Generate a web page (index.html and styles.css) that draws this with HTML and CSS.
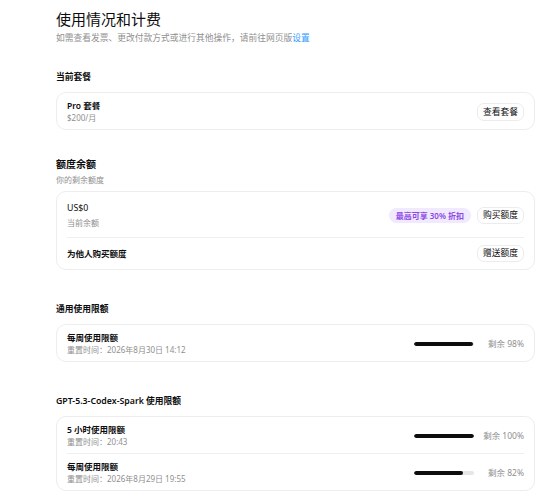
FILE: index.html
```html
<!DOCTYPE html>
<html lang="zh-CN">
<head>
	<meta charset="utf-8">
	<meta name="viewport" content="width=device-width, initial-scale=1">
	<title>使用情况和计费</title>
	<link rel="stylesheet" href="styles.css">
</head>
<body>
<div class="page">

	<h1 class="title">使用情况和计费</h1>
	<p class="lead">如需查看发票、更改付款方式或进行其他操作，请前往网页版<a href="#">设置</a></p>

	<!-- 当前套餐 -->
	<section class="section first">
		<h2 class="label">当前套餐</h2>
		<div class="card">
			<div class="row plan">
				<div class="info">
					<div class="name">Pro 套餐</div>
					<div class="meta">$200/月</div>
				</div>
				<button class="btn">查看套餐</button>
			</div>
		</div>
	</section>

	<!-- 额度余额 -->
	<section class="section credits">
		<h2 class="heading">额度余额</h2>
		<p class="sub">你的剩余额度</p>
		<div class="card">
			<div class="row balance">
				<div class="info">
					<div class="amount">US$0</div>
					<div class="meta">当前余额</div>
				</div>
				<div class="actions">
					<span class="badge">最高可享 30% 折扣</span>
					<button class="btn">购买额度</button>
				</div>
			</div>
			<div class="row gift">
				<div class="name">为他人购买额度</div>
				<button class="btn">赠送额度</button>
			</div>
		</div>
	</section>

	<!-- 通用使用限额 -->
	<section class="section">
		<h2 class="label">通用使用限额</h2>
		<div class="card">
			<div class="row limit">
				<div class="info">
					<div class="name">每周使用限额</div>
					<div class="meta">重置时间：2026年8月30日 14:12</div>
				</div>
				<div class="usage">
					<div class="bar"><div class="fill" style="width: 98%"></div></div>
					<span class="left">剩余 98%</span>
				</div>
			</div>
		</div>
	</section>

	<!-- Codex-Spark 使用限额 -->
	<section class="section">
		<h2 class="label">GPT-5.3-Codex-Spark 使用限额</h2>
		<div class="card">
			<div class="row limit">
				<div class="info">
					<div class="name">5 小时使用限额</div>
					<div class="meta">重置时间：20:43</div>
				</div>
				<div class="usage">
					<div class="bar"><div class="fill" style="width: 100%"></div></div>
					<span class="left">剩余 100%</span>
				</div>
			</div>
			<div class="row limit">
				<div class="info">
					<div class="name">每周使用限额</div>
					<div class="meta">重置时间：2026年8月29日 19:55</div>
				</div>
				<div class="usage">
					<div class="bar"><div class="fill" style="width: 82%"></div></div>
					<span class="left">剩余 82%</span>
				</div>
			</div>
		</div>
	</section>

</div>
</body>
</html>
```

FILE: styles.css
```css
body{margin: 0; background: #fff;}
body,button{
	font-family: "Noto Sans", "Noto Sans CJK SC", sans-serif;
	color: #0d0d0d;
}
.page{padding: 8px 17px 0 56px;}

.title{margin: 0; font-size: 15px; line-height: 22px; font-weight: 400;}
.lead{margin: 1px 0 0; font-size: 8.75px; line-height: 14px; color: #8f8f8f;}
.lead a{color: #339cff; text-decoration: none;}

.section{margin-top: 32px;}
.section.first{margin-top: 25px;}
.section.credits{margin-top: 27px;}

.label{margin: 0 0 8px; font-size: 8.75px; line-height: 14px; font-weight: 600;}
.heading{margin: 0; font-size: 10px; line-height: 14px; font-weight: 600;}
.sub{margin: 2px 0 4px; font-size: 8px; line-height: 14px; color: #8f8f8f;}

.card{
	border: 1px solid #ededed;
	border-radius: 10px;
	background: #fff;
}
.row{
	display: flex; align-items: center; justify-content: space-between;
	margin: 0 10px;
	padding: 7px 0 5px;
}
.row + .row{border-top: 1px solid #efefef;}
.row.plan{padding: 7px 0 5px;}
.row.balance{padding: 10px 0 8px;}
.row.gift{padding: 7px 0 7px;}

.info{display: flex; flex-direction: column;}
.name{font-size: 8.5px; line-height: 12px; font-weight: 600;}
.meta{font-size: 8px; line-height: 12px; color: #8f8f8f;}
.balance .info .meta{line-height: 13px; margin-top: 1px;}
.amount{font-size: 8.75px; line-height: 13px;}

.actions{display: flex; align-items: center; gap: 6px;}

.btn{
	height: 17px; padding: 0 5px;
	border: 1px solid #ececec; border-radius: 7px;
	background: #fff;
	font-size: 8.75px; line-height: 15px;
	cursor: pointer;
}
.row.plan .btn{height: 18px;}

.badge{
	height: 15px; padding: 0 7px;
	border-radius: 8px;
	background: #f1e9fd; color: #8b48e6;
	font-size: 8px; line-height: 15px; font-weight: 600;
}

.usage{display: flex; align-items: center;}
.bar{
	width: 60px; height: 4px;
	border-radius: 2px;
	background: #e6e6e6;
	overflow: hidden;
}
.fill{height: 100%; border-radius: 2px; background: #0d0d0d;}
.left{
	width: 50px; text-align: right;
	font-size: 8.5px; line-height: 12px; color: #8f8f8f;
}
```
